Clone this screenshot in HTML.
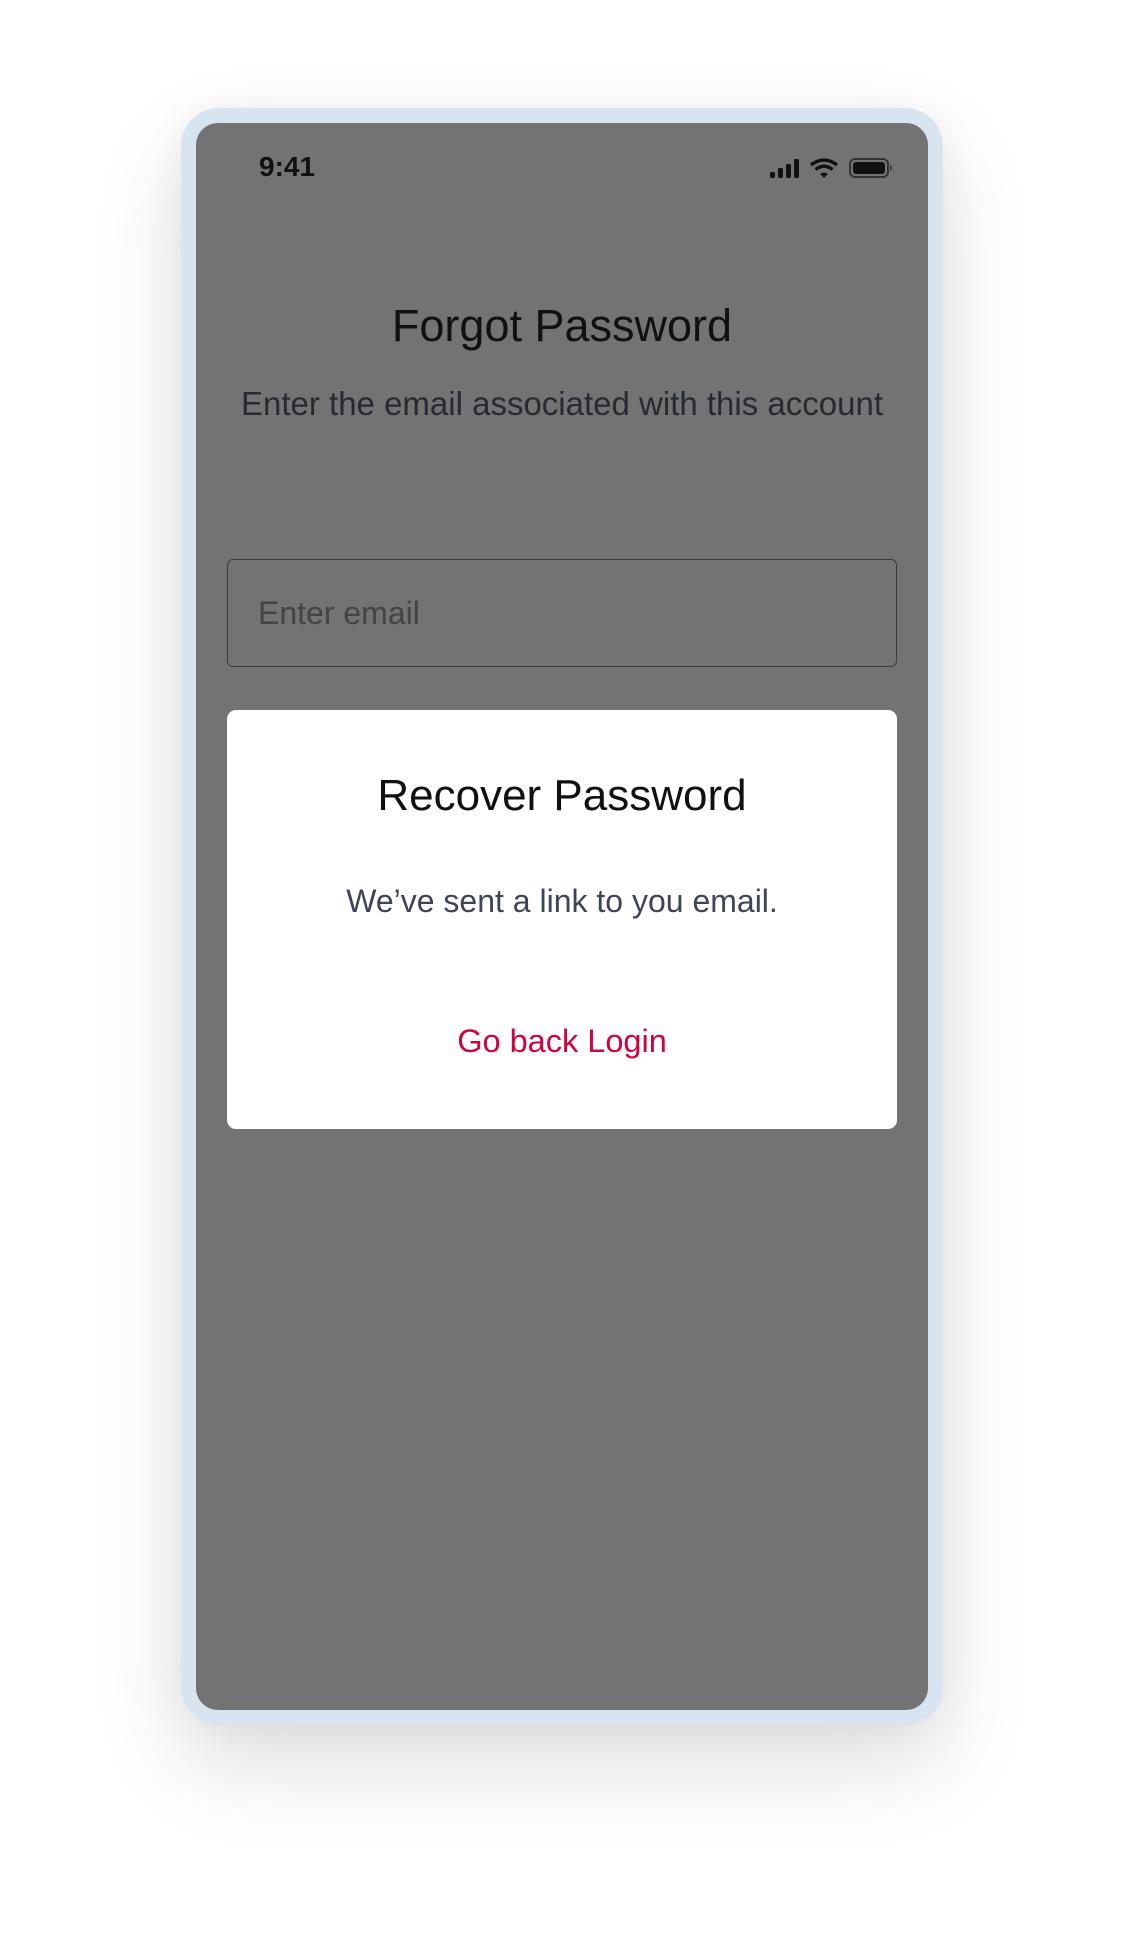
<!DOCTYPE html>
<html><head><meta charset="utf-8"><style>
html,body{margin:0;padding:0;background:#fff;width:1121px;height:1947px;overflow:hidden;font-family:"Liberation Sans",sans-serif}
.frame{position:absolute;left:181px;top:108px;width:762px;height:1602px;border-radius:38px;background:#d8e4f0;box-shadow:0 40px 90px rgba(0,0,0,0.13),0 0 40px rgba(0,0,0,0.05)}
.screen{position:absolute;left:196px;top:123px;width:732px;height:1572px;border-radius:22px;background:#737373;overflow:hidden}
.t{position:absolute;left:0;width:732px;text-align:center;white-space:nowrap}
</style></head><body>
<div class="frame" style="height:1617px"></div>
<div class="screen" style="height:1587px">
 <div style="position:absolute;left:63px;top:28px;font-size:28px;font-weight:bold;color:#111">9:41</div>
 <svg style="position:absolute;left:571px;top:34px" width="130" height="24" viewBox="0 0 130 24">
  <rect x="3" y="15" width="5" height="6" rx="1.5" fill="#111"/>
  <rect x="11" y="11" width="5" height="10" rx="1.5" fill="#111"/>
  <rect x="19" y="7" width="5" height="14" rx="1.5" fill="#111"/>
  <rect x="27" y="2" width="5" height="19" rx="1.5" fill="#111"/>
  <path d="M44 8 Q57 -2 70 8" stroke="#111" stroke-width="3.5" fill="none"/>
  <path d="M48.5 12.5 Q57 6 65.5 12.5" stroke="#111" stroke-width="3.5" fill="none"/>
  <path d="M53 17 L57 21 L61 17 Q57 14 53 17Z" fill="#111"/>
  <rect x="83" y="2" width="38" height="18" rx="5" fill="none" stroke="#333" stroke-width="2"/>
  <rect x="86" y="5" width="32" height="12" rx="3" fill="#111"/>
  <rect x="123" y="8" width="2" height="6" rx="1" fill="#444"/>
 </svg>
 <div class="t" style="top:177px;font-size:45px;color:#111">Forgot Password</div>
 <div class="t" style="top:262px;font-size:33px;color:#262a33">Enter the email associated with this account</div>
 <div style="position:absolute;left:31px;top:436px;width:670px;height:108px;border:1.5px solid #3b3b3b;border-radius:6px;box-sizing:border-box"></div>
 <div style="position:absolute;left:62px;top:472px;font-size:32px;color:#444">Enter email</div>
 <div style="position:absolute;left:31px;top:587px;width:670px;height:419px;background:#fff;border-radius:9px"></div>
 <div class="t" style="top:648px;font-size:44px;color:#111">Recover Password</div>
 <div class="t" style="top:760px;font-size:32px;color:#3e4556">We’ve sent a link to you email.</div>
 <div class="t" style="top:900px;font-size:32.5px;color:#d0043c">Go back Login</div>
</div>
</body></html>
